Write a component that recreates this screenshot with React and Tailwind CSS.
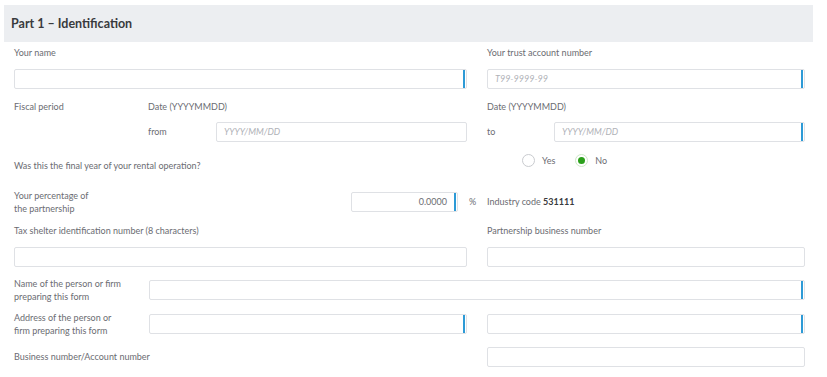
const Field = ({ placeholder, value, bar, className = "" }) => (
  <div className={`flex h-[20px] items-center rounded-[2px] border border-[#dfe1e5] bg-white ${className}`}>
    <span className={`flex-1 px-[7px] text-[9px] ${value ? "text-right text-[#6b6c72]" : "italic text-[#b0b2b7]"}`}>
      {value || placeholder}
    </span>
    {bar && <span className="mr-[1px] h-[18px] w-[2px] bg-[#2d9ad6]"></span>}
  </div>
);

const Radio = ({ label, checked }) => (
  <label className="flex items-center gap-[7px]">
    <span
      className={`flex h-[13px] w-[13px] items-center justify-center rounded-full border ${
        checked ? "border-[#cfe8c9] bg-white" : "border-[#c9cbcf]"
      }`}
    >
      {checked && <span className="h-[7px] w-[7px] rounded-full bg-[#2ca01c]"></span>}
    </span>
    <span className="text-[9px] text-[#6b6c72]">{label}</span>
  </label>
);

export default function App() {
  return (
    <div
      className="h-[377px] w-[827px] overflow-hidden bg-white text-[9px] leading-[12px] text-[#6b6c72]"
      style={{ fontFamily: "Lato, 'Noto Sans', sans-serif" }}
    >
      {/* Header */}
      <div className="ml-[4px] mt-[5px] flex h-[37px] w-[809px] items-center bg-[#eceef1] pl-[7px]">
        <h1 className="text-[12.5px] font-bold text-[#393a3d]">Part 1 – Identification</h1>
      </div>

      <div className="pl-[14px]">
        {/* Name / trust account */}
        <div className="mt-[5px] grid grid-cols-[453px_318px] gap-x-[20px]">
          <div>
            <div>Your name</div>
            <Field bar className="mt-[10px]" />
          </div>
          <div>
            <div>Your trust account number</div>
            <Field bar placeholder="T99-9999-99" className="mt-[10px]" />
          </div>
        </div>

        {/* Fiscal period */}
        <div className="mt-[12px] grid grid-cols-[453px_318px] gap-x-[20px]">
          <div className="flex">
            <span className="w-[134px]">Fiscal period</span>
            <span>Date (YYYYMMDD)</span>
          </div>
          <div>Date (YYYYMMDD)</div>
        </div>
        <div className="mt-[9px] grid grid-cols-[453px_318px] gap-x-[20px]">
          <div className="flex items-center pl-[134px]">
            <span className="w-[68px]">from</span>
            <Field placeholder="YYYY/MM/DD" className="flex-1" />
          </div>
          <div className="flex items-center">
            <span className="w-[67px]">to</span>
            <Field bar placeholder="YYYY/MM/DD" className="flex-1" />
          </div>
        </div>

        {/* Final year */}
        <div className="mt-[12px] grid h-[18px] grid-cols-[453px_318px] gap-x-[20px]">
          <div className="self-end">Was this the final year of your rental operation?</div>
          <div className="flex gap-[20px] self-start pl-[35px]">
            <Radio label="Yes" />
            <Radio label="No" checked />
          </div>
        </div>

        {/* Percentage */}
        <div className="mt-[17px] flex items-center">
          <div className="w-[337px] leading-[13px]">
            Your percentage of
            <br />
            the partnership
          </div>
          <Field bar value="0.0000" className="w-[107px]" />
          <span className="ml-[11px] w-[18px]">%</span>
          <span>
            Industry code <b className="font-bold text-[#393a3d]">531111</b>
          </span>
        </div>

        {/* Tax shelter / partnership */}
        <div className="mt-[10px] grid grid-cols-[453px_318px] gap-x-[20px]">
          <div>
            <div>Tax shelter identification number (8 characters)</div>
            <Field className="mt-[10px]" />
          </div>
          <div>
            <div>Partnership business number</div>
            <Field className="mt-[10px]" />
          </div>
        </div>

        {/* Preparer name */}
        <div className="mt-[10px] flex w-[791px] items-center">
          <div className="w-[135px] leading-[13px]">
            Name of the person or firm
            <br />
            preparing this form
          </div>
          <Field bar className="flex-1" />
        </div>

        {/* Preparer address */}
        <div className="mt-[8px] grid grid-cols-[453px_318px] gap-x-[20px]">
          <div className="flex items-center">
            <div className="w-[135px] leading-[13px]">
              Address of the person or
              <br />
              firm preparing this form
            </div>
            <Field bar className="flex-1" />
          </div>
          <div className="flex items-center">
            <Field bar className="flex-1" />
          </div>
        </div>

        {/* Business number */}
        <div className="mt-[10px] grid grid-cols-[453px_318px] gap-x-[20px]">
          <div className="flex items-center">Business number/Account number</div>
          <Field />
        </div>
      </div>
    </div>
  );
}
